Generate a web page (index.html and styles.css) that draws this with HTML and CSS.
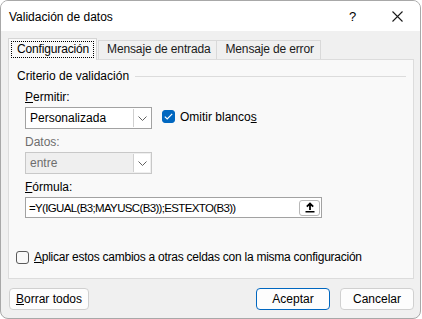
FILE: index.html
```html
<!DOCTYPE html>
<html lang="es">

<head>
  <meta charset="UTF-8">
  <title>Validación de datos</title>
  <link rel="stylesheet" href="styles.css">
</head>

<body>
  <div class="window">
    <div class="titlebar">
      <span class="title">Validación de datos</span>
      <span class="help">?</span>
      <span class="close">
        <svg width="11" height="11" viewBox="0 0 11 11"><path d="M0.5 0.5 L10.5 10.5 M10.5 0.5 L0.5 10.5" stroke="#1a1a1a" stroke-width="1.1" fill="none"/></svg>
      </span>
    </div>

    <div class="content">
      <div class="tabs">
        <div class="tab active"><span class="focus">Configuración</span></div>
        <div class="tab">Mensaje de entrada</div>
        <div class="tab">Mensaje de error</div>
      </div>

      <div class="panel">
        <div class="group-title">
          <span>Criterio de validación</span>
          <span class="rule"></span>
        </div>

        <div class="field">
          <div class="label"><u>P</u>ermitir:</div>
          <div class="row">
            <div class="select">
              <span class="value">Personalizada</span>
              <span class="drop">
                <svg width="9" height="5" viewBox="0 0 9 5"><path d="M0.5 0.5 L4.5 4.5 L8.5 0.5" stroke="#606060" fill="none"/></svg>
              </span>
            </div>
            <div class="check">
              <span class="box checked">
                <svg width="9" height="7" viewBox="0 0 9 7"><path d="M0.8 3.6 L3.2 6 L8.2 0.8" stroke="#fff" stroke-width="1.2" fill="none"/></svg>
              </span>
              <span>Omitir blanco<u>s</u></span>
            </div>
          </div>
        </div>

        <div class="field">
          <div class="label disabled">Datos:</div>
          <div class="select off">
            <span class="value">entre</span>
            <span class="drop">
              <svg width="9" height="5" viewBox="0 0 9 5"><path d="M0.5 0.5 L4.5 4.5 L8.5 0.5" stroke="#606060" fill="none"/></svg>
            </span>
          </div>
        </div>

        <div class="field">
          <div class="label"><u>F</u>órmula:</div>
          <div class="formula">
            <span class="value">=Y(IGUAL(B3;MAYUSC(B3));ESTEXTO(B3))</span>
            <span class="collapse">
              <svg width="10" height="11" viewBox="0 0 10 11"><path d="M5 1.5 L5 8 M1.8 4.6 L5 1.5 L8.2 4.6" stroke="#000" stroke-width="1.8" fill="none"/><rect x="0.5" y="9" width="9" height="1.5" fill="#000"/></svg>
            </span>
          </div>
        </div>

        <div class="apply">
          <span class="box"></span>
          <span><u>A</u>plicar estos cambios a otras celdas con la misma configuración</span>
        </div>
      </div>

      <div class="buttons">
        <button class="btn"><u>B</u>orrar todos</button>
        <span class="spacer"></span>
        <button class="btn primary">Aceptar</button>
        <button class="btn">Cancelar</button>
      </div>
    </div>
  </div>
</body>

</html>
```

FILE: styles.css
```css
* {
  margin: 0;
  padding: 0;
  box-sizing: border-box;
}

body {
  font-family: 'Liberation Sans', Arial, sans-serif;
  font-size: 12px;
  color: #000;
  background: #ffffff;
}

.window {
  width: 421px;
  height: 319px;
  border: 1px solid #a8a8a8;
  border-radius: 8px;
  overflow: hidden;
  background: #f0f0f0;
  display: flex;
  flex-direction: column;
}

.titlebar {
  height: 30px;
  background: #ffffff;
  display: flex;
  align-items: center;
  padding-left: 8px;
  flex-shrink: 0;
}

.title {
  flex: 1;
  padding-top: 1px;
}

.help {
  font-size: 13px;
  width: 12px;
  margin-right: 31px;
}

.close {
  display: flex;
  margin-right: 17px;
}

.content {
  padding: 7px 6px 0 7px;
  flex: 1;
  display: flex;
  flex-direction: column;
}

.tabs {
  display: flex;
  align-items: flex-end;
  height: 21px;
  padding-left: 1px;
  position: relative;
  z-index: 1;
}

.tab {
  height: 19px;
  line-height: 17px;
  padding: 0 6px 0 8px;
  background: #f0f0f0;
  border: 1px solid #d9d9d9;
  border-bottom: none;
  margin-left: -1px;
  color: #1a1a1a;
  letter-spacing: -0.15px;
}

.tab.active {
  height: 22px;
  margin-bottom: -1px;
  background: #f9f9f9;
  padding: 2px 2px 0 2px;
  margin-right: 2px;
  border-color: #d5d5d5;
  color: #000;
}

.focus {
  display: block;
  border: 1px dotted #000;
  line-height: 15px;
  padding: 0 4px 0 5px;
}

.panel {
  height: 220px;
  background: #f9f9f9;
  border: 1px solid #dcdcdc;
  padding: 8px 7px 0 8px;
  display: flex;
  flex-direction: column;
}

.group-title {
  display: flex;
  align-items: center;
  line-height: 16px;
}

.group-title .rule {
  flex: 1;
  height: 1px;
  background: #dcdcdc;
  margin-left: 6px;
}

.field {
  padding-left: 8px;
}

.label {
  line-height: 16px;
  margin-top: 5px;
  margin-bottom: 2px;
}

.label.disabled {
  color: #6d6d6d;
}

.row {
  display: flex;
  align-items: center;
}

.select {
  width: 127px;
  height: 22px;
  border: 1px solid #a2a2a2;
  background: #ffffff;
  display: flex;
  align-items: stretch;
}

.select .value {
  flex: 1;
  padding-left: 4px;
  line-height: 20px;
}

.select .drop {
  width: 17px;
  border-left: 1px solid #d0d0d0;
  display: flex;
  align-items: center;
  justify-content: center;
  background: #ffffff;
  margin: 1px 1px 1px 0;
}

.select.off {
  background: #efefef;
  border-color: #c8c8c8;
  color: #6d6d6d;
}

.check {
  display: flex;
  align-items: center;
  margin-left: 10px;
  margin-top: -3px;
}

.box {
  width: 13px;
  height: 13px;
  border: 1px solid #5a5a5a;
  border-radius: 3px;
  background: #f9f9f9;
  display: flex;
  align-items: center;
  justify-content: center;
  margin-right: 5px;
}

.box.checked {
  background: #0067c0;
  border-color: #0067c0;
}

.formula {
  width: 297px;
  height: 21px;
  border: 1px solid #a2a2a2;
  background: #ffffff;
  display: flex;
  align-items: center;
}

.formula .value {
  flex: 1;
  padding-left: 3px;
  font-size: 11.5px;
  letter-spacing: -0.65px;
}

.collapse {
  width: 21px;
  height: 16px;
  border: 1px solid #b8b8b8;
  border-radius: 3px;
  display: flex;
  align-items: center;
  justify-content: center;
  margin-right: 1px;
}

.apply {
  display: flex;
  align-items: center;
  margin-top: auto;
  margin-bottom: 14px;
  margin-left: -1px;
  letter-spacing: -0.25px;
}

.buttons {
  display: flex;
  align-items: center;
  margin-top: 9px;
  padding-left: 1px;
}

.spacer {
  flex: 1;
}

.btn {
  font-family: inherit;
  font-size: 12px;
  color: #000;
  height: 22px;
  background: #fdfdfd;
  border: 1px solid #d0d0d0;
  border-radius: 4px;
  width: 74px;
}

.btn:first-child {
  width: 80px;
}

.btn.primary {
  border-color: #0067c0;
  margin-right: 10px;
}
```
